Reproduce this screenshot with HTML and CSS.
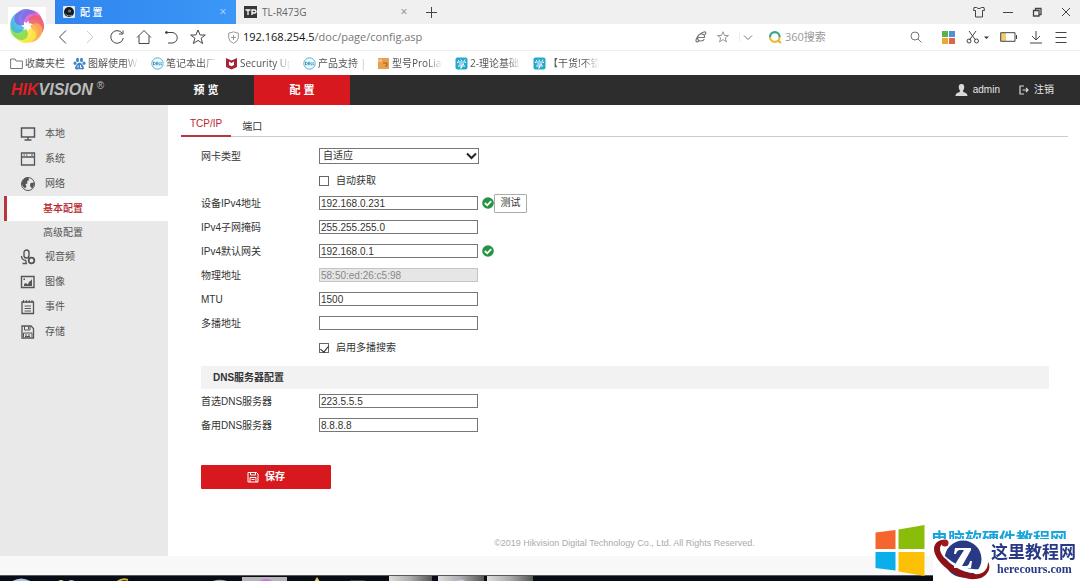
FILE: index.html
```html
<!DOCTYPE html>
<html lang="zh-CN">
<head>
<meta charset="utf-8">
<title>配置</title>
<link rel="stylesheet" href="styles.css">
</head>
<body>
<header class="browser">
  <svg class="browser-logo" viewBox="0 0 38 38" aria-hidden="true">
    <rect width="38" height="38" fill="#fff"/>
    <g fill-opacity=".9">
      <path d="M18 16C11 11 14 3 22 3C30 3 36 10 34 19C31 12 24 10 18 16Z" fill="#d95fd8"/>
      <path transform="rotate(51 19 19)" d="M18 16C11 11 14 3 22 3C30 3 36 10 34 19C31 12 24 10 18 16Z" fill="#ee5f6c"/>
      <path transform="rotate(103 19 19)" d="M18 16C11 11 14 3 22 3C30 3 36 10 34 19C31 12 24 10 18 16Z" fill="#ffab4c"/>
      <path transform="rotate(154 19 19)" d="M18 16C11 11 14 3 22 3C30 3 36 10 34 19C31 12 24 10 18 16Z" fill="#fbe83f"/>
      <path transform="rotate(206 19 19)" d="M18 16C11 11 14 3 22 3C30 3 36 10 34 19C31 12 24 10 18 16Z" fill="#84dc4c"/>
      <path transform="rotate(257 19 19)" d="M18 16C11 11 14 3 22 3C30 3 36 10 34 19C31 12 24 10 18 16Z" fill="#45b7e6"/>
      <path transform="rotate(309 19 19)" d="M18 16C11 11 14 3 22 3C30 3 36 10 34 19C31 12 24 10 18 16Z" fill="#7a6fe6"/>
    </g>
    <circle cx="19" cy="19" r="2.800" fill="#fff"/>
  </svg>
  <div class="tabstrip">
    <div class="tab tab-active">
      <svg width="12" height="12" viewBox="0 0 12 12"><rect width="12" height="12" rx="1" fill="#dfe8f3"/><circle cx="6" cy="6" r="5" fill="#15181d"/><circle cx="6.6" cy="5" r="1.6" fill="#5e7890"/><path d="M2.500 8C4 10 7 10.500 9 9" stroke="#8ca0b5" fill="none"/></svg>
      <span class="tab-title">配 置</span>
      <button class="tab-close" aria-label="关闭标签">×</button>
    </div>
    <div class="tab">
      <svg width="13" height="12" viewBox="0 0 13 12"><rect width="13" height="12" fill="#383838"/><path d="M1.500 4H6.500M4 4V9M8 9V4H10.500Q12 4 12 5.500T10.500 7H8" stroke="#fff" stroke-width="1.300" fill="none"/></svg>
      <span class="tab-title">TL-R473G</span>
      <button class="tab-close" aria-label="关闭标签">×</button>
    </div>
    <button class="new-tab" aria-label="新建标签"><svg width="11" height="11" viewBox="0 0 11 11"><path d="M5.500 0V11M0 5.500H11"/></svg></button>
    <div class="window-controls">
      <button aria-label="皮肤"><svg viewBox="0 0 14 14"><path d="M4.500 2.500H2L1.500 5.500H3.500V12H10.500V5.500H12.500L12 2.500H9.500Q7 5 4.500 2.500Z"/></svg></button>
      <button aria-label="最小化"><svg viewBox="0 0 14 14"><path d="M2 7.500H12"/></svg></button>
      <button aria-label="还原"><svg viewBox="0 0 14 14"><path d="M3.500 5.500H9V11H3.500ZM5.500 5V3.500H11V9.500H9.500" stroke-width="1.300"/></svg></button>
      <button aria-label="关闭"><svg viewBox="0 0 14 14"><path d="M3 3L11 11M11 3L3 11"/></svg></button>
    </div>
  </div>
  <div class="toolbar">
    <div class="nav-buttons">
      <button aria-label="后退"><svg viewBox="0 0 16 16"><path d="M11 1.500L4.500 8L11 14.500"/></svg></button>
      <button class="faint" aria-label="前进"><svg viewBox="0 0 16 16"><path d="M5 2L11 8L5 14"/></svg></button>
      <button aria-label="刷新"><svg viewBox="0 0 16 16"><path d="M13 4A6.300 6.300 0 1 0 14.300 9M14 1.500V5H10"/></svg></button>
      <button aria-label="主页"><svg viewBox="0 0 16 16"><path d="M1 8.500L8 1.500L15 8.500M3 7V14.500H13V7"/></svg></button>
      <button aria-label="恢复"><svg viewBox="0 0 16 16"><path d="M4 3.500H9A5 5 0 0 1 9 14H5M2 3.500H5"/><circle cx="3.500" cy="3.500" r="1" fill="#444"/></svg></button>
      <button aria-label="收藏"><svg viewBox="0 0 16 16"><path d="M8 1L10.100 6H15.300L11.100 9.200L12.600 14.500L8 11.400L3.400 14.500L4.900 9.200L.7 6H5.900Z"/></svg></button>
    </div>
    <div class="address">
      <svg width="11" height="13" viewBox="0 0 11 13"><path d="M5.500 .8Q8 2 10.300 2V7Q10 10.500 5.500 12.300Q1 10.500 .7 7V2Q3 2 5.500 .8ZM5.500 4V9M3 6.500H8" fill="none" stroke="#999"/></svg>
      <span class="url"><span class="host">192.168.254.5</span>/doc/page/config.asp</span>
    </div>
    <div class="address-tools">
      <button aria-label="兼容模式"><svg width="12" height="12" viewBox="0 0 12 12"><path d="M2.500 6.500H9.500Q10 3 6.500 3T2.500 6.500Q2.500 10 6 10Q8.500 10 9.300 8.300M10 4Q12 .5 9 1Q3 3 1 9Q.5 12 4 10" stroke-width="1.200"/></svg></button>
      <button aria-label="收藏此页"><svg width="12" height="12" viewBox="0 0 16 16"><path d="M8 1L10.100 6H15.300L11.100 9.200L12.600 14.500L8 11.400L3.400 14.500L4.900 9.200L.7 6H5.900Z"/></svg></button>
      <button class="divided" aria-label="更多"><svg width="10" height="10" viewBox="0 0 10 10"><path d="M1 3.500L5 7.500L9 3.500"/></svg></button>
    </div>
    <label class="search">
      <svg width="14" height="14" viewBox="0 0 14 14" fill="none" stroke-width="2.200"><path d="M2 7A4.800 4.800 0 0 1 11.600 7" stroke="#36a58c"/><path d="M11.600 7A4.800 4.800 0 0 1 2 7" stroke="#e9bd38"/><path d="M10 10.500L13 13" stroke="#efaa3a"/></svg>
      <input type="text" placeholder="360搜索" aria-label="搜索">
      <svg width="12" height="12" viewBox="0 0 12 12" fill="none" stroke="#777"><circle cx="5" cy="5" r="4"/><path d="M8 8L11.500 11.500"/></svg>
    </label>
    <div class="extensions">
      <button aria-label="应用"><svg width="13" height="13" viewBox="0 0 13 13"><g stroke="none"><path fill="#59b24a" d="M0 0H6V6H0Z"/><path fill="#4c93d9" d="M7 0H13V6H7Z"/><path fill="#e9a93a" d="M0 7H6V13H0Z"/><path fill="#df6546" d="M7 7H13V13H7Z"/></g></svg></button>
      <button aria-label="截图"><svg width="23" height="14" viewBox="0 0 23 14"><path d="M3 1L9.500 10M10 1L3.500 10"/><circle cx="3" cy="11" r="2"/><circle cx="10.500" cy="11" r="2"/><path d="M18 6.500H23L20.500 9Z" fill="#333" stroke="none"/></svg></button>
      <button aria-label="省电"><svg width="18" height="10" viewBox="0 0 18 10"><path d="M1 1H6V9H1Z" fill="#f1cd70" stroke="none"/><path d="M.7 .7H15V9.300H.7ZM16.500 3V7"/></svg></button>
      <button aria-label="下载"><svg width="14" height="14" viewBox="0 0 14 14"><path d="M7 1V10M3 6L7 10L11 6M1 13H13"/></svg></button>
      <button aria-label="菜单"><svg width="14" height="14" viewBox="0 0 14 14"><path d="M1.500 2.500H12.500M1.500 7.500H12.500M1.500 12.500H12.500"/></svg></button>
    </div>
  </div>
  <nav class="bookmarks">
    <a class="folder" href="#"><svg viewBox="0 0 13 13"><path d="M.6 2H5L6 4H12.400V11.500H.6Z" fill="none" stroke="#777"/></svg><span>收藏夹栏</span></a>
    <a class="wide" href="#"><svg viewBox="0 0 13 13" fill="#4385c9"><ellipse cx="4.500" cy="3" rx="1.500" ry="2.200"/><ellipse cx="8.500" cy="3" rx="1.500" ry="2.200"/><ellipse cx="2" cy="6.300" rx="1.500" ry="1.800"/><ellipse cx="11" cy="6.300" rx="1.500" ry="1.800"/><path d="M6.500 5.500C9 6 10.500 9 11 10.500C11 13.500 8.500 12.300 6.500 12.300S2 13.500 2 10.500C2.500 9 4 6 6.500 5.500Z"/><path d="M5 8.500V10.500M7.500 8V10.500H9" stroke="#fff" fill="none"/></svg><span>图解使用WS</span></a>
    <a href="#"><svg viewBox="0 0 13 13"><circle cx="6.500" cy="6.500" r="5.700" fill="#eefaff" stroke="#58b4ce"/><path d="M2.500 5V8Q4.500 8 4.500 6.500T2.500 5M7 5.200H5.500V7.800H7M5.500 6.500H7M8 5V7.800H9.300M10 5V7.800H11" stroke="#2f8daf" fill="none" stroke-width=".8"/></svg><span>笔记本出厂</span></a>
    <a class="wide" href="#"><svg viewBox="0 0 13 13"><path d="M1 1L6.500 3.500L12 1V10L6.500 12.500L1 10Z" fill="#a72335"/><path d="M4 4.500L6.500 6L9 4.500V8L6.500 9.300L4 8Z" fill="#fff"/></svg><span>Security Up</span></a>
    <a href="#"><svg viewBox="0 0 13 13"><circle cx="6.500" cy="6.500" r="5.700" fill="#eefaff" stroke="#58b4ce"/><path d="M2.500 5V8Q4.500 8 4.500 6.500T2.500 5M7 5.200H5.500V7.800H7M5.500 6.500H7M8 5V7.800H9.300M10 5V7.800H11" stroke="#2f8daf" fill="none" stroke-width=".8"/></svg><span>产品支持 |</span></a>
    <a class="wide" href="#"><svg viewBox="0 0 13 13"><rect x="1" y="1" width="11" height="11" fill="#e8a04e"/><path d="M1 2H5V5H1Z" fill="#f5bd72"/><path d="M6 6H10V9H8" stroke="#a85b26" fill="none"/></svg><span>型号ProLian</span></a>
    <a class="wide" href="#"><svg viewBox="0 0 13 13"><rect x=".5" y=".5" width="12" height="12" rx="2" fill="#25a9cb"/><path d="M3 3L4 4M6 2.500L6.500 4M10 2.500L9 4M2.500 6V5H10.500V6M4 7H9L6.500 8.500V11H5M3 9H10" stroke="#fff" fill="none"/></svg><span>2-理论基础</span></a>
    <a class="wide" href="#"><svg viewBox="0 0 13 13"><rect x=".5" y=".5" width="12" height="12" rx="2" fill="#25a9cb"/><path d="M3 3L4 4M6 2.500L6.500 4M10 2.500L9 4M2.500 6V5H10.500V6M4 7H9L6.500 8.500V11H5M3 9H10" stroke="#fff" fill="none"/></svg><span>【干货!不错</span></a>
  </nav>
</header>

<div class="device-bar">
  <a class="brand" href="#"><b>HIK</b><span>VISION</span><sup>®</sup></a>
  <nav class="device-nav">
    <a href="#">预 览</a>
    <a class="current" href="#">配 置</a>
  </nav>
  <div class="account">
    <span><svg width="13" height="12" viewBox="0 0 13 12" fill="#d8d8d8"><path d="M6.500 0C9 0 9.500 2 9.200 4C9 5.500 8 6 8 7.500C8.500 8.500 12.500 8.500 12.500 12H.5C.5 8.500 4.500 8.500 5 7.500C5 6 4 5.500 3.800 4C3.500 2 4 0 6.500 0Z"/></svg>admin</span>
    <a href="#"><svg width="10" height="10" viewBox="0 0 10 10" fill="none" stroke="#d8d8d8" stroke-width="1.200"><path d="M5 1H1V9H5M3.500 5H9M7 3L9 5L7 7"/></svg>注销</a>
  </div>
</div>

<div class="workspace">
  <nav class="sidebar">
    <a href="#"><svg viewBox="0 0 16 16"><path d="M1.500 2H14.500V11H1.500ZM8 11V14M4.500 14H11.500" stroke-width="1.500"/></svg>本地</a>
    <a href="#"><svg viewBox="0 0 16 16"><path d="M1.500 2H14.500V14H1.500ZM1.500 6H14.500" stroke-width="1.300"/><path d="M3.500 4H5M6 4H7.500M11 4H13"/></svg>系统</a>
    <a href="#"><svg viewBox="0 0 16 16"><circle cx="8" cy="8" r="6.500"/><path d="M3 4Q5 1 8.500 1.700L9 4L7 5.500L7.500 7.500L5.500 8L6.500 10.500L5 12.500L2.500 10Q1 7 3 4ZM10.500 7L14 6.500Q14.500 9.500 12 12.500L10 10Z" fill="#555" stroke="none"/></svg>网络</a>
    <a class="sub selected" href="#">基本配置</a>
    <a class="sub" href="#">高级配置</a>
    <a href="#"><svg viewBox="0 0 16 16"><rect x="4" y="1" width="5" height="8" rx="2.500" stroke-width="1.400"/><path d="M1.500 7Q1.500 11 6 11.500M6 11.500V14M2.500 14.500H7" stroke-width="1.300"/><circle cx="11.500" cy="11.500" r="2.800" stroke-width="1.800"/></svg>视音频</a>
    <a href="#"><svg viewBox="0 0 16 16"><path d="M1.500 2.500H14V13.500H1.500Z" stroke-width="1.400"/><path d="M4 12V10L6 9L8 10.500L9 7.500H10L12 5V12ZM3.500 4.500H5V6H3.500Z" fill="#555" stroke="none"/></svg>图像</a>
    <a href="#"><svg viewBox="0 0 16 16"><path d="M2 3H13.500V14.500H2Z" stroke-width="1.300"/><path d="M3.500 1V4M6.300 1V4M9.200 1V4M12 1V4M4.500 7H11M4.500 9.500H11M4.500 12H11"/></svg>事件</a>
    <a href="#"><svg viewBox="0 0 16 16"><path d="M2 2H11L13.500 4.500V14H2Z" stroke-width="1.300"/><path d="M4.500 2V6H10V2M8.500 3V5M3.500 9H12V13M3.500 9V13M5 11H7M8 11H10M5 12.500H10"/></svg>存储</a>
  </nav>
  <main class="content">
    <nav class="page-tabs">
      <a class="current" href="#">TCP/IP</a>
      <a href="#">端口</a>
    </nav>
    <form class="settings">
      <div class="row">
        <label for="nic">网卡类型</label>
        <div class="picker">
          <select id="nic"><option>自适应</option></select>
          <svg width="11" height="8" viewBox="0 0 11 8"><path d="M1 1.500L5.500 6L10 1.500" fill="none" stroke="#222" stroke-width="2"/></svg>
        </div>
      </div>
      <div class="row check-row"><label class="check"><input type="checkbox">自动获取</label></div>
      <div class="row">
        <label for="ip">设备IPv4地址</label>
        <input id="ip" type="text" value="192.168.0.231">
        <svg class="ok" viewBox="0 0 12 12"><circle cx="6" cy="6" r="5.800" fill="#249444"/><path d="M2.800 6L5.200 8.300L9.200 4.200" fill="none" stroke="#fff" stroke-width="1.800"/></svg>
        <button class="test" type="button">测试</button>
      </div>
      <div class="row"><label for="mask">IPv4子网掩码</label><input id="mask" type="text" value="255.255.255.0"></div>
      <div class="row">
        <label for="gateway">IPv4默认网关</label>
        <input id="gateway" type="text" value="192.168.0.1">
        <svg class="ok" viewBox="0 0 12 12"><circle cx="6" cy="6" r="5.800" fill="#249444"/><path d="M2.800 6L5.200 8.300L9.200 4.200" fill="none" stroke="#fff" stroke-width="1.800"/></svg>
      </div>
      <div class="row"><label for="mac">物理地址</label><input id="mac" type="text" value="58:50:ed:26:c5:98" disabled></div>
      <div class="row"><label for="mtu">MTU</label><input id="mtu" type="text" value="1500"></div>
      <div class="row"><label for="multicast">多播地址</label><input id="multicast" type="text"></div>
      <div class="row check-row"><label class="check"><input type="checkbox" checked>启用多播搜索</label></div>
      <h2>DNS服务器配置</h2>
      <div class="row"><label for="dns1">首选DNS服务器</label><input id="dns1" type="text" value="223.5.5.5"></div>
      <div class="row"><label for="dns2">备用DNS服务器</label><input id="dns2" type="text" value="8.8.8.8"></div>
      <button class="save" type="button"><svg width="12" height="12" viewBox="0 0 12 12" fill="none" stroke="#fff"><path d="M1 1.500H9.500L11 3V11H1ZM3.500 1.500V4H8.500V1.500M3 6.500H9V11M3 6.500V11M4.500 8.500H7.500"/></svg>保存</button>
    </form>
    <footer>©2019 Hikvision Digital Technology Co., Ltd. All Rights Reserved.</footer>
  </main>
</div>
<div class="status-strip"></div>
<div class="taskbar">
  <svg width="540" height="6" viewBox="0 0 540 6" aria-hidden="true">
    <defs><linearGradient id="task"><stop offset="0" stop-color="#ddd"/><stop offset=".5" stop-color="#aaa"/><stop offset="1" stop-color="#555"/></linearGradient></defs>
    <path d="M11 6Q21 -1 32 6Z" fill="#a9c4e2"/><path d="M57 6Q61 2 65 6Z" fill="#d8d65a"/><path d="M67 6Q71 2 76 6Z" fill="#77b7e5"/>
    <path d="M117 6Q122 2 128 4" fill="none" stroke="#d8ad45" stroke-width="2"/><path d="M211 6Q218 2 227 5Z" fill="#8ba98b"/>
    <path d="M242 1H287V6H242Z" fill="#b5b4b8"/><path d="M258 6Q266 0 274 6Z" fill="#cf72dc"/><path d="M314 6L317 1L320 6Z" fill="#e6cf64"/><path d="M350 6V4H365V6Z" fill="#333c38"/>
    <path d="M389 0H432V6H389Z" fill="url(#task)"/><path d="M438 0H484V6H438Z" fill="url(#task)"/><path d="M487 0H533V6H487Z" fill="url(#task)"/><path d="M455 6Q461 1 467 6Z" fill="#b6ccf5"/>
  </svg>
</div>

<aside class="watermark">
  <svg class="panes" viewBox="0 0 49 51" aria-hidden="true"><path d="M0 7.500L20 5V24H0Z" fill="#f5652d"/><path d="M23 4.500L49 0V24H23Z" fill="#8abd0a"/><path d="M0 27H20V45.500L0 43Z" fill="#09aeea"/><path d="M23 27H49V51L23 46.500Z" fill="#fcc106"/></svg>
  <div class="watermark-text">
    <span class="under">电脑软硬件教程网</span>
    <div class="badge">
      <svg width="58" height="42" viewBox="0 0 58 42" aria-hidden="true">
        <circle cx="30" cy="20" r="18.500" fill="#283985"/>
        <path d="M15 3C11 -2 1 2 1 10C1 23 25 42 43 40C54 39 59 29 55 23C55 31 50 36 41 35C26 34 7 19 7 10C7 5 11 4 15 3Z" fill="#8e1116"/>
        <circle cx="12" cy="4" r="3.500" fill="#a3181c"/>
        <path d="M8 13C14 25 31 35 43 34C49 33 52 28 52 25C50 30 46 31 40 30C27 29 16 22 8 13Z" fill="#fff"/>
        <path d="M22 9H38V11L29 27H33Q36 27 37 22H39L38 29H21V27L31 11H27Q24 11 23 15H21Z" fill="#fff"/>
      </svg>
      <p><strong>这里教程网</strong><small>herecours.com</small></p>
    </div>
  </div>
</aside>
</body>
</html>
```
FILE: styles.css
```css
* { box-sizing: border-box; }
body {
  margin: 0;
  min-height: 100vh;
  display: flex;
  flex-direction: column;
  overflow: hidden;
  background: #fff;
  color: #333;
  font: 10px/16px "Liberation Sans", "Noto Sans CJK SC", sans-serif;
}
a { color: inherit; text-decoration: none; }
button, input, select { font: inherit; color: inherit; }
button { border: 0; padding: 0; background: none; }
svg { display: block; flex: none; }

/* Browser chrome */
.browser { position: relative; font-family: "Open Sans", "Noto Sans CJK SC", sans-serif; }
.browser-logo { position: absolute; left: 8px; top: 7px; width: 38px; height: 38px; }
.tabstrip { display: flex; align-items: center; height: 24px; padding-left: 55px; background: #f0f0f0; }
.tab { display: flex; align-items: center; gap: 5px; width: 181px; height: 24px; padding: 0 8px; color: #666; }
.tab-active { background: linear-gradient(90deg, #2f85ee, #3b97f7); color: #fff; font-weight: 500; }
.tab-title { flex: 1; }
.tab-close { width: 10px; font-size: 12px; color: #888; }
.tab-active .tab-close { color: #b7d9ff; }
.new-tab { margin-left: 9px; }
.tabstrip button svg, .toolbar button svg { fill: none; stroke: #444; }
.window-controls { display: flex; gap: 15px; margin-left: auto; padding-right: 7px; }
.window-controls svg { width: 14px; height: 14px; }
.toolbar { display: flex; align-items: center; height: 27px; padding: 0 12px 0 55px; border-bottom: 1px solid #eee; }
.nav-buttons { display: flex; gap: 11px; }
.nav-buttons svg { width: 16px; height: 16px; }
.toolbar .faint svg { stroke: #ccc; }
.address { flex: 1; display: flex; align-items: center; gap: 4px; padding-left: 22px; font-size: 11px; color: #777; }
.host { color: #111; }
.address-tools { display: flex; align-items: center; gap: 10px; }
.toolbar .address-tools svg { stroke: #777; }
.divided { border-left: 1px solid #eee; padding-left: 3px; }
.search { display: flex; align-items: center; gap: 3px; width: 174px; margin-left: 15px; padding-right: 20px; }
.search input { flex: 1; min-width: 0; border: 0; padding: 0; outline: 0; background: none; font-size: 11px; }
.search input::placeholder { color: #999; opacity: 1; }
.extensions { display: flex; align-items: center; gap: 11px; }
.bookmarks { display: flex; align-items: center; height: 24px; padding-left: 10px; color: #555; }
.bookmarks a { display: flex; align-items: center; gap: 2px; width: 74px; }
.bookmarks .wide { width: 78px; }
.bookmarks .folder { width: 63px; }
.bookmarks svg { width: 13px; height: 13px; }
.bookmarks span {
  width: 51px;
  white-space: nowrap;
  mask-image: linear-gradient(90deg, #000 70%, transparent);
}
.bookmarks .folder span { mask-image: none; }

/* Device header */
.device-bar { display: flex; align-items: stretch; height: 30px; background: #2d2d2d; color: #fff; line-height: 30px; }
.brand { width: 158px; padding-left: 11px; font-size: 16px; font-style: italic; font-weight: bold; line-height: 30px; color: #bbb; }
.brand b { color: #dd1f27; }
.brand sup { margin-left: 4px; font-size: 10px; font-style: normal; font-weight: normal; line-height: 1; }
.device-nav { display: flex; font-size: 11px; font-weight: bold; }
.device-nav a { width: 96px; text-align: center; }
.device-nav .current { background: #d7191f; }
.account { display: flex; gap: 19px; margin-left: auto; padding-right: 26px; color: #e6e6e6; line-height: 28px; }
.account > * { display: flex; align-items: center; gap: 5px; }

/* Sidebar */
.workspace { flex: 1; display: flex; }
.sidebar { width: 168px; padding-top: 16px; background: #e9e9e9; color: #555; }
.sidebar a { display: flex; align-items: center; gap: 9px; height: 25px; padding: 1px 0 0 20px; }
.sidebar svg { width: 16px; height: 16px; fill: none; stroke: #555; }
.sidebar .sub { height: 23px; padding-left: 43px; }
.sidebar .selected { height: 25px; margin-left: 4px; padding-left: 36px; border-left: 3px solid #b8373c; background: #fff; color: #b8262c; font-weight: 500; }

/* Settings page */
.content { flex: 1; display: flex; flex-direction: column; padding: 8px 12px 4px 13px; }
.page-tabs { display: flex; height: 24px; border-bottom: 1px solid #ccc; line-height: 27px; }
.page-tabs a { height: 24px; padding: 0 11px; }
.page-tabs .current { padding: 0 9px; border-bottom: 2px solid #b8373c; color: #b8262c; line-height: 22px; }
.settings { padding: 7px 19px 0 20px; }
.row { display: flex; align-items: center; height: 24px; }
.row > label:first-child { width: 118px; padding-top: 2px; }
.row input[type="text"] {
  width: 159px;
  height: 14px;
  padding: 0 1px;
  border: 1px solid #777;
  border-radius: 0;
  background: #fff;
  line-height: 12px;
}
.row input[type="text"]:disabled { border-color: #c4c4c4; background: #e6e6e6; color: #888; }
.picker { position: relative; }
.picker select { display: block; width: 160px; height: 16px; padding: 0 3px; border: 1px solid #777; border-radius: 0; background: #fff; appearance: none; line-height: 14px; }
.picker svg { position: absolute; right: 2px; top: 4px; pointer-events: none; }
.row.check-row { height: 23px; padding: 2px 0 0 118px; }
.row > .check:first-child { display: flex; align-items: center; gap: 7px; width: auto; padding: 0; }
.check input { display: grid; place-items: center; width: 10px; height: 10px; margin: 0; border: 1px solid #666; background: #fff; appearance: none; }
.check input:checked::after { content: ""; width: 4px; height: 7px; border: solid #222; border-width: 0 1px 1px 0; rotate: 40deg; }
.ok { width: 12px; height: 12px; margin-left: 4px; }
.test { width: 33px; height: 19px; border: 1px solid #aaa; border-radius: 1px; background: #fff; }
h2 { height: 23px; margin: 8px 0 0; padding-left: 12px; background: #f2f2f2; font-size: 10px; font-weight: bold; line-height: 24px; }
.save { display: flex; align-items: center; justify-content: center; gap: 6px; width: 130px; height: 24px; margin-top: 28px; border-radius: 1px; background: #d7191f; color: #fff; font-weight: bold; }
footer { margin-top: auto; text-align: center; color: #aaa; font-size: 9px; line-height: 18px; }

.status-strip { height: 19px; background: #f8f8f8; }
.taskbar { height: 6px; border-top: 1px solid #555b63; background: #080c14; overflow: hidden; }

/* Watermark over the page corner */
.watermark { position: fixed; right: 0; bottom: 0; display: flex; align-items: flex-end; gap: 6px; }
.panes { width: 50px; height: 51px; margin-bottom: 5px; }
.watermark-text { width: 149px; }
.under { display: block; height: 9px; overflow: hidden; color: #19a5dc; font-size: 17px; font-weight: bold; line-height: 20px; white-space: nowrap; }
.badge { display: flex; height: 42px; margin-left: 2px; background: #fff; color: #283985; }
.badge p { display: flex; flex-direction: column; margin: 0; }
.badge strong { font: bold 17px/24px "Noto Sans CJK SC", sans-serif; white-space: nowrap; }
.badge small { padding-left: 6px; font: bold 12px/12px "Liberation Serif", serif; }
```
